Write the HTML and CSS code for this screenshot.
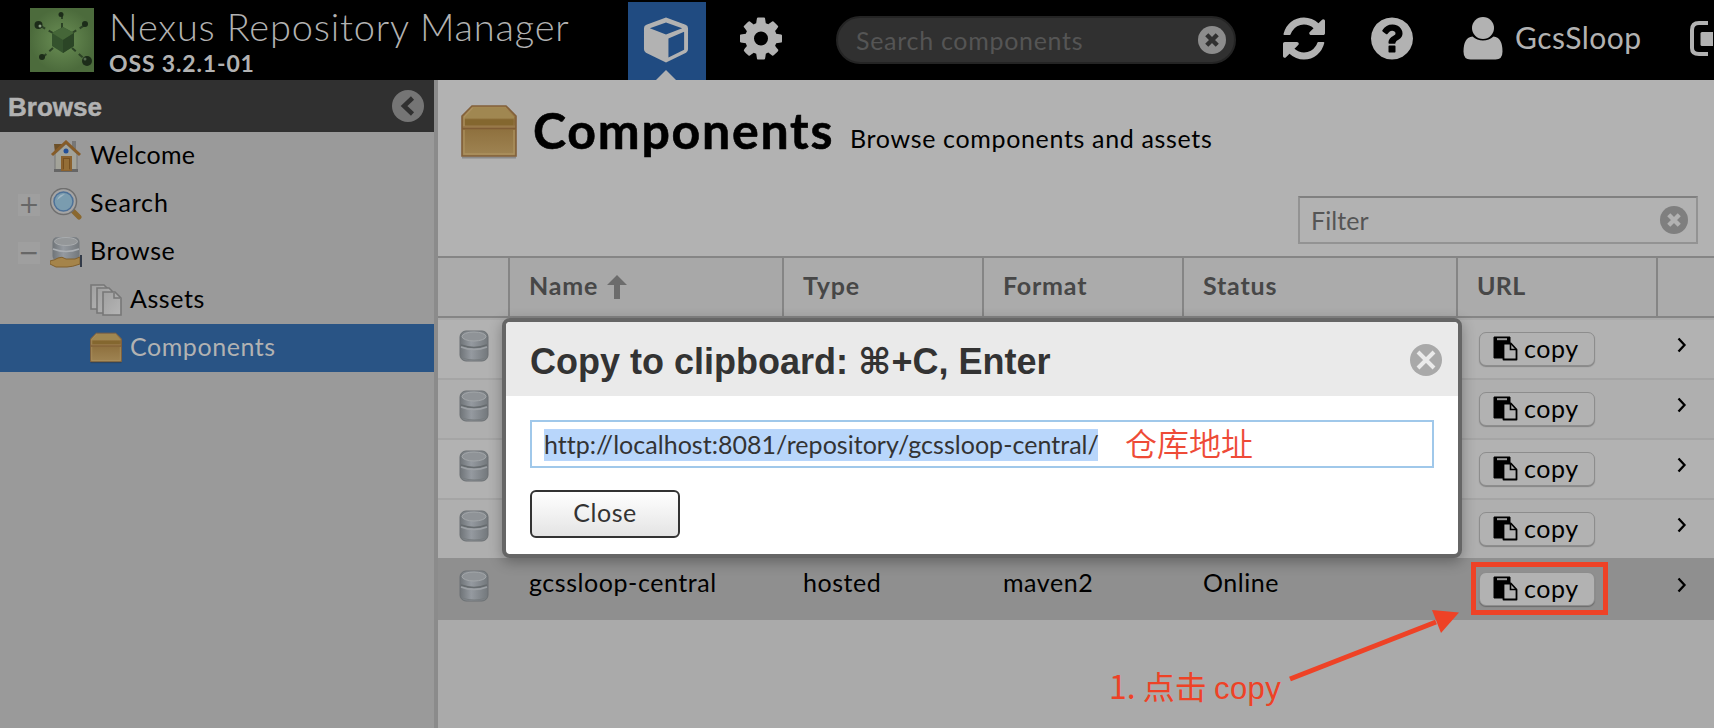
FILE: index.html
```
<!DOCTYPE html>
<html lang="en">
<head>
<meta charset="utf-8">
<title>Nexus Repository Manager</title>
<link rel="stylesheet" href="styles.css">
</head>
<body>
<svg class="defs" width="0" height="0">
  <defs>
    <linearGradient id="box-g" x1="0" y1="0" x2="0" y2="1"><stop offset="0" stop-color="#a98b57"/><stop offset=".3" stop-color="#8a6b38"/><stop offset="1" stop-color="#9f8453"/></linearGradient>
    <linearGradient id="db-g" x1="0" y1="0" x2="1" y2="0"><stop offset="0" stop-color="#6f7478"/><stop offset=".4" stop-color="#959aa0"/><stop offset="1" stop-color="#73787c"/></linearGradient>
    <radialGradient id="logo-g"><stop offset="0" stop-color="#6b8f55"/><stop offset="1" stop-color="#4c6b3c"/></radialGradient>
    <linearGradient id="page-g" x1="0" y1="0" x2="1" y2="1"><stop offset="0" stop-color="#a0a0a0"/><stop offset="1" stop-color="#b5b5b5"/></linearGradient>
    <symbol id="box" viewBox="0 0 56 54">
      <path d="M1 51.5h54v2H1z" fill="#000" opacity=".22"/>
      <path d="M11 1h34l10 10v40H1V11z" fill="url(#box-g)" stroke="#82603a" stroke-width="1.6"/>
      <path d="M12 2.5h32l9 9v2H3v-2z" fill="#a08751"/>
      <path d="M4 14.500h48v6H4z" fill="#84672f"/>
      <path d="M2 20.500h52v2.500H2z" fill="#98794a"/>
      <path d="M1 23.500h54" stroke="#7f5c35" stroke-width="1.600"/>
      <path d="M3 25v24h50V25M3 21v-9l8.500-9" fill="none" stroke="#ac915f" stroke-width="1.300"/>
    </symbol>
    <symbol id="db" viewBox="0 0 30 32">
      <rect x="1" y="1" width="28" height="30" rx="6" fill="url(#db-g)" stroke="#6c7174"/>
      <ellipse cx="15" cy="6.500" rx="12" ry="4.500" fill="#8f9397" stroke="#a2a6a9"/>
      <path d="M2 15q13 5 26 0" fill="none" stroke="#666b6e" stroke-width="1.500"/>
      <path d="M2 17q13 5 26 0" fill="none" stroke="#9da1a5" stroke-width="1.500"/>
      <path d="M3 28q12 4 24 0" fill="none" stroke="#787d80"/>
    </symbol>
    <symbol id="copy" viewBox="0 0 25 25">
      <path d="M1 1h16v7h-4l-3 3v11H1z" fill="#000" stroke="#000" stroke-linejoin="round"/>
      <path d="M4 2.200h10v2H4z" fill="#9c9c9c"/>
      <path d="M10.500 7.500h7.500l5.500 6v10h-13z" fill="#b2b2b2" stroke="#000" stroke-width="1.800" stroke-linejoin="round"/>
      <path d="M17.500 7.500v6h6" fill="none" stroke="#000" stroke-width="1.600"/>
    </symbol>
    <symbol id="clear" viewBox="0 0 32 32">
      <circle cx="16" cy="16" r="16" fill="currentColor"/>
      <path d="M10 10l12 12M22 10L10 22" stroke="var(--x)" stroke-width="var(--w)" stroke-linecap="butt"/>
    </symbol>
    <symbol id="clear-big" viewBox="0 0 32 32">
      <circle cx="16" cy="16" r="16" fill="currentColor"/>
      <path d="M8 8l16 16M24 8L8 24" stroke="var(--x)" stroke-width="var(--w)"/>
    </symbol>
    <symbol id="chev" viewBox="0 0 10 16"><path d="M1.500 1.500L7.500 8l-6 6.500" fill="none" stroke="#000" stroke-width="2.300"/></symbol>
  </defs>
</svg>

<div class="app">
  <header class="topbar">
    <svg class="logo" viewBox="0 0 64 64">
      <rect width="64" height="64" fill="url(#logo-g)"/>
      <g stroke="#2c4226" stroke-width="2" stroke-dasharray="5 4"><path d="M32 20V6M23 25L9 17M42 25l13-8M23 40L12 50M42 40l15 13"/></g>
      <g fill="#1c2c19"><circle cx="31" cy="6.500" r="2.500"/><circle cx="8.500" cy="17" r="4"/><circle cx="55" cy="16" r="3"/><circle cx="12" cy="49" r="3"/><circle cx="57" cy="53" r="5"/></g>
      <path d="M33 19l11 6v13l-11 7-11-7V25z" fill="#34522d"/><path d="M33 19l11 6-11 7-11-7z" fill="#456638"/><path d="M33 32l11-7v13l-11 7z" fill="#2b4526"/>
      <circle cx="10" cy="18" r="1.500" fill="#899d82"/><circle cx="55" cy="51" r="1.500" fill="#566b50"/>
    </svg>
    <div class="brand">
      <div class="brand-name">Nexus Repository Manager</div>
      <div class="brand-version">OSS 3.2.1-01</div>
    </div>
    <div class="mode active">
      <svg class="cube" viewBox="0 0 46 47"><path d="M23 .5L43 8q2.500 1 2.500 3.500V33q0 2.500-2 3.500L23 46.500 2.500 36.500Q.5 35.500.5 33V11.500Q.5 9 3 8zM23 5.500L6.500 11.500 23 18l16.500-6.500zM25.500 22v19.500L41.500 33.500V15z" fill="#b2b2b2" fill-rule="evenodd"/></svg>
      <span class="pointer"></span>
    </div>
    <svg class="fa gear" viewBox="128 128 1536 1536"><path d="M1152 896q0-106-75-181t-181-75-181 75-75 181 75 181 181 75 181-75 75-181zm512-109v222q0 12-8 23t-20 13l-185 28q-19 54-39 91 35 50 107 138 10 12 10 25t-9 23q-27 37-99 108t-94 71q-12 0-26-9l-138-108q-44 23-91 38-16 136-29 186-7 28-36 28h-222q-14 0-24.500-8.500t-11.500-21.500l-28-184q-49-16-90-37l-141 107q-10 9-25 9-14 0-25-11-126-114-165-168-7-10-7-23 0-12 8-23 15-21 51-66.500t54-70.500q-27-50-41-99l-183-27q-13-2-21-12.500t-8-23.500v-222q0-12 8-23t19-13l186-28q14-46 39-92-40-57-107-138-10-12-10-24 0-10 9-23 26-36 98.500-107.500t94.500-71.500q13 0 26 10l138 107q44-23 91-38 16-136 29-186 7-28 36-28h222q14 0 24.500 8.500t11.500 21.500l28 184q49 16 90 37l142-107q9-9 24-9 13 0 25 10 129 119 165 170 7 8 7 22 0 12-8 23-15 21-51 66.500t-54 70.500q26 50 41 98l183 28q13 2 21 12.500t8 23.500z"/></svg>
    <div class="search"><span class="search-hint">Search components</span><svg class="search-clear"><use href="#clear"/></svg></div>
    <svg class="fa refresh" viewBox="128 128 1536 1536"><path d="M1639 1056q0 5-1 7-64 268-268 434.500t-478 166.500q-146 0-282.500-55t-243.500-157l-129 129q-19 19-45 19t-45-19-19-45v-448q0-26 19-45t45-19h448q26 0 45 19t19 45-19 45l-137 137q71 66 161 102t187 36q134 0 250-65t186-179q11-17 53-117 8-23 30-23h192q13 0 22.500 9.500t9.500 22.500zm25-800v448q0 26-19 45t-45 19h-448q-26 0-45-19t-19-45 19-45l138-138q-148-137-349-137-134 0-250 65t-186 179q-11 17-53 117-8 23-30 23h-199q-13 0-22.500-9.500t-9.500-22.500v-7q65-268 270-434.500t480-166.500q146 0 284 55.500t245 156.500l130-129q19-19 45-19t45 19 19 45z"/></svg>
    <svg class="fa help" viewBox="128 128 1536 1536"><path d="M1024 1376v-192q0-14-9-23t-23-9h-192q-14 0-23 9t-9 23v192q0 14 9 23t23 9h192q14 0 23-9t9-23zm256-672q0-88-55.500-163t-138.500-116-170-41q-243 0-371 213-15 24 8 42l132 100q7 6 19 6 16 0 25-12 53-68 86-92 34-24 86-24 48 0 85.500 26t37.500 59q0 38-20 61t-68 45q-63 28-115.500 86.500t-52.500 125.500v36q0 14 9 23t23 9h192q14 0 23-9t9-23q0-19 21.500-49.500t54.500-49.500q32-18 49-28.500t46-35 44.500-48 28-60.500 12.500-81zm384 192q0 209-103 385.500t-279.500 279.500-385.500 103-385.500-103-279.500-279.500-103-385.500 103-385.500 279.500-279.500 385.500-103 385.500 103 279.500 279.500 103 385.500z"/></svg>
    <svg class="user-icon" viewBox="0 0 39 43"><circle cx="19.500" cy="11" r="11" fill="#b2b2b2"/><path d="M9 19.500q4.500 4 10.500 4t10.500-4q9 1 9 15 0 8-7 8H7q-7 0-7-8 0-14 9-15z" fill="#b2b2b2"/></svg>
    <span class="user-name">GcsSloop</span>
    <svg class="signout" viewBox="0 0 23 36"><path d="M18 2H9Q2 2 2 9v18q0 6 7 6h9" fill="none" stroke="#b2b2b2" stroke-width="4"/><path d="M12 11h11v14H12q-1.500 0-1.500-1.500v-11Q10.500 11 12 11z" fill="#b2b2b2"/></svg>
  </header>

  <div class="body">
    <nav class="side">
      <div class="side-head"><span class="side-title">Browse</span>
        <svg class="collapse" viewBox="0 0 32 32"><circle cx="16" cy="16" r="16" fill="#757575"/><path d="M20.500 8L12 16l8.500 8" fill="none" stroke="#303030" stroke-width="4.500"/></svg>
      </div>
      <div class="node l1"><span class="exp none"></span>
        <svg class="ico" viewBox="0 0 32 32"><path d="M22 1h4v10h-4z" fill="#777"/><path d="M5 14L16 4l11 10v16H5z" fill="#a3a399" stroke="#777"/><path d="M4 29h24v3H4z" fill="#666"/><path d="M4 4h9l-8 9z" fill="#6d5028"/><path d="M2 15L16 2l14 13" fill="none" stroke="#865c28" stroke-width="3"/><path d="M12 17h9v13h-9z" fill="#765020" stroke="#8b622e" stroke-width="2"/><path d="M14 19h5v11h-5z" fill="#946e37"/><circle cx="16" cy="11" r="2.500" fill="#235098"/></svg>
        <span class="t-welcome">Welcome</span></div>
      <div class="node l1"><span class="exp">+</span>
        <svg class="ico" viewBox="0 0 32 32"><path d="M22 22l7 7" stroke="#8a682f" stroke-width="5" stroke-linecap="round"/><circle cx="13.500" cy="13.500" r="13" fill="#a5a5a5" stroke="#6f6f6f" stroke-width="1.500"/><circle cx="13.500" cy="13.500" r="9.500" fill="#7a9caf" stroke="#4d7198" stroke-width="1.500"/><path d="M7 12q2-6 8-6-4 3-8 6z" fill="#a3b8c5"/></svg>
        <span class="t-search">Search</span></div>
      <div class="node l1"><span class="exp">−</span>
        <svg class="ico" viewBox="0 0 32 32"><rect x="2.500" y="1" width="27" height="24" rx="5" fill="url(#db-g)"/><ellipse cx="16" cy="5.500" rx="11.500" ry="4" fill="#949799" stroke="#a9acae"/><path d="M3 13q13 5 26 0" fill="none" stroke="#abafb3" stroke-width="1.500"/><path d="M0 25q5-1 8-3 4-2 8 1l9 0 5-2v7q-8 3-13 3H6L0 28z" fill="#a5844a" stroke="#80602f"/><path d="M30 19h2v12h-2z" fill="#333b49"/></svg>
        <span class="t-browse">Browse</span></div>
      <div class="node l2">
        <svg class="ico" viewBox="0 0 32 32"><g fill="url(#page-g)" stroke="#777" stroke-width="1.600"><path d="M1 1h13l3 3v21H1z"/><path d="M7 4h12l3 3v22H7z"/><path d="M13 8h12l6 6v17H13z"/></g><path d="M24 9v5h6" fill="none" stroke="#777" stroke-width="1.500"/></svg>
        <span class="t-assets">Assets</span></div>
      <div class="node l2 selected">
        <svg class="ico"><use href="#box"/></svg>
        <span class="t-comp">Components</span></div>
    </nav>

    <main class="main">
      <div class="page-head">
        <svg class="page-icon"><use href="#box"/></svg>
        <h1 class="page-title">Components</h1>
        <span class="page-sub">Browse components and assets</span>
      </div>
      <div class="toolbar">
        <div class="filter"><span class="filter-hint">Filter</span><svg class="filter-clear"><use href="#clear"/></svg></div>
      </div>
      <div class="grid-row grid-head">
        <div></div>
        <div class="sorted"><span class="h-name">Name</span><svg class="sort" viewBox="0 0 20 24"><path d="M10 0l10 10h-7v14H7V10H0z" fill="#6c6c6c"/></svg></div>
        <div><span class="h-type">Type</span></div><div><span class="h-format">Format</span></div><div><span class="h-status">Status</span></div><div><span class="h-url">URL</span></div><div></div>
      </div>
      <div class="grid-row item odd"><div class="c-ico"><svg class="db"><use href="#db"/></svg></div><div></div><div></div><div></div><div></div><div class="c-url"><span class="copy-btn"><svg><use href="#copy"/></svg><span>copy</span></span></div><div class="c-go"><svg><use href="#chev"/></svg></div></div>
      <div class="grid-row item"><div class="c-ico"><svg class="db"><use href="#db"/></svg></div><div></div><div></div><div></div><div></div><div class="c-url"><span class="copy-btn"><svg><use href="#copy"/></svg><span>copy</span></span></div><div class="c-go"><svg><use href="#chev"/></svg></div></div>
      <div class="grid-row item odd"><div class="c-ico"><svg class="db"><use href="#db"/></svg></div><div></div><div></div><div></div><div></div><div class="c-url"><span class="copy-btn"><svg><use href="#copy"/></svg><span>copy</span></span></div><div class="c-go"><svg><use href="#chev"/></svg></div></div>
      <div class="grid-row item before"><div class="c-ico"><svg class="db"><use href="#db"/></svg></div><div></div><div></div><div></div><div></div><div class="c-url"><span class="copy-btn"><svg><use href="#copy"/></svg><span>copy</span></span></div><div class="c-go"><svg><use href="#chev"/></svg></div></div>
      <div class="grid-row item current"><div class="c-ico"><svg class="db"><use href="#db"/></svg></div><div class="c-text"><span class="v-name">gcssloop-central</span></div><div class="c-text"><span class="v-type">hosted</span></div><div class="c-text"><span class="v-format">maven2</span></div><div class="c-text"><span class="v-status">Online</span></div><div class="c-url"><span class="copy-btn"><svg><use href="#copy"/></svg><span>copy</span></span></div><div class="c-go"><svg><use href="#chev"/></svg></div></div>
    </main>
  </div>

  <section class="dialog">
    <div class="dialog-head"><span class="dialog-title">Copy to clipboard: ⌘+C, Enter</span><svg class="dialog-x"><use href="#clear-big"/></svg></div>
    <div class="dialog-body">
      <div class="url-field"><span class="url-text">http://localhost:8081/repository/gcssloop-central/</span><span class="note">仓库地址</span></div>
      <div class="close-btn"><span>Close</span></div>
    </div>
  </section>

  <div class="mark-box"></div>
  <svg class="mark-arrow" viewBox="0 0 176 76"><path d="M4 71L150 14" stroke="#ee4226" stroke-width="5" fill="none"/><path d="M173 4.500L146 2l9 23z" fill="#ee4226"/></svg>
  <div class="mark-text">1. 点击 <span class="mark-copy">copy</span></div>
</div>
</body>
</html>
```
FILE: styles.css
```
* { box-sizing: border-box; }
body {
  margin: 0;
  font-family: Lato, "Noto Sans CJK SC", sans-serif;
  font-size: 25px;
  letter-spacing: .55px;
  color: #000;
  white-space: nowrap;
}
.defs { position: absolute; }
.app { position: relative; width: 1714px; height: 728px; overflow: hidden; background: #aaa; display: flex; flex-direction: column; }
svg { display: block; flex: none; }

/* Top bar */
.topbar { height: 80px; flex: none; background: #000; color: #b2b2b2; display: flex; align-items: flex-start; padding-left: 30px; }
.logo { width: 64px; height: 64px; margin-top: 8px; }
.brand { margin-left: 15px; width: 519px; flex: none; }
.brand-name { font-weight: 300; font-size: 38px; line-height: 46px; padding-top: 3px; letter-spacing: .8px; }
.brand-version { font-weight: 700; font-size: 23px; line-height: 28px; letter-spacing: .85px; }
.mode { position: relative; width: 78px; height: 78px; margin-top: 2px; background: #204b81; flex: none; display: flex; justify-content: center; padding: 15px 2px 0 0; }
.cube { width: 46px; height: 46px; }
.pointer { position: absolute; left: 28px; bottom: 0; border: 10px solid transparent; border-top: 0; border-bottom: 10px solid #b2b2b2; }
.fa { width: 42px; height: 43px; margin-top: 17px; fill: #b2b2b2; }
.gear { margin-left: 34px; }
.search { width: 400px; height: 48px; flex: none; margin: 16px 0 0 54px; border-radius: 24px; background: #303030; border: 2px solid #242424; color: #555; display: flex; align-items: center; justify-content: space-between; padding: 0 8px 0 18px; letter-spacing: .7px; }
.search-clear { width: 28px; height: 28px; color: #8c8c8c; --x: #303030; --w: 5px; }
.refresh { margin-left: 47px; }
.help { margin-left: 46px; }
.user-icon { width: 40px; height: 43px; margin: 17px 0 0 50px; }
.user-name { font-size: 30px; line-height: 36px; letter-spacing: .45px; margin: 19px 0 0 12px; width: 175px; flex: none; }
.signout { width: 23px; height: 36px; margin-top: 21px; }

/* Sidebar */
.body { display: flex; flex: 1; }
.side { width: 438px; flex: none; background: #9a9a9a; border-right: 4px solid #8b8b8b; }
.side-head { height: 52px; background: #303030; color: #b2b2b2; display: flex; align-items: center; justify-content: space-between; padding: 0 10px 0 8px; font: 700 26px "Liberation Sans", Arial, sans-serif; letter-spacing: 0; }
.side-title { -webkit-text-stroke: .5px #b2b2b2; padding-top: 2px; }
.collapse { width: 32px; height: 32px; }
.node { height: 48px; display: flex; align-items: center; padding-bottom: 4px; }
.node .ico { width: 32px; height: 32px; margin-right: 8px; position: relative; top: 2px; }
.l1 { padding-left: 18px; }
.l2 { padding-left: 90px; }
.exp { width: 22px; height: 22px; margin: 5px 10px 0 0; background: #9f9f9f; color: #676767; font: 25px/21px "DejaVu Sans", sans-serif; letter-spacing: 0; display: flex; justify-content: center; flex: none; }
.exp.none { visibility: hidden; }
.selected { background: #295485; color: #b2b2b2; }
.t-welcome { letter-spacing: .3px; }
.t-search { letter-spacing: .85px; }

/* Content */
.main { flex: 1; min-width: 0; background: #aaa; }
.page-head { height: 104px; padding: 25px 0 0 23px; display: flex; align-items: flex-start; background: #b2b2b2; }
.page-icon { width: 56px; height: 54px; }
.page-title { margin: -5px 0 0 16px; width: 317px; font-size: 50px; line-height: 60px; font-weight: 700; letter-spacing: 1.75px; -webkit-text-stroke: .6px #000; }
.page-sub { line-height: 30px; margin-top: 18px; letter-spacing: .66px; }
.toolbar { height: 72px; background: #b2b2b2; display: flex; justify-content: flex-end; padding: 12px 16px 0 0; }
.filter { width: 400px; height: 48px; border: 2px solid #939393; border-top-color: #808080; color: #555; display: flex; align-items: center; justify-content: space-between; padding: 0 8px 0 11px; letter-spacing: .1px; }
.filter-clear { width: 28px; height: 28px; color: #7f7f7f; --x: #b2b2b2; --w: 5px; }
.grid-row { display: grid; grid-template-columns: 72px 274px 200px 200px 274px 200px 1fr; }
.grid-head { height: 62px; border-top: 2px solid #858585; border-bottom: 2px solid #858585; background: #ababab; color: #474747; font-weight: 700; letter-spacing: .8px; }
.grid-head > div { border-right: 2px solid #858585; padding: 0 0 5px 19px; display: flex; align-items: center; }
.grid-head > div:last-child { border-right: 0; }
.grid-head .sorted { background: #a8a8a8; }
.h-url { letter-spacing: .3px; }
.sort { width: 20px; height: 24px; margin: 4px 0 0 9px; }
.item { height: 60px; padding-bottom: 2px; background: #afafaf; border-bottom: 2px solid #a5a5a5; }
.item.odd { background: #b2b2b2; }
.item.before { border-bottom-color: #8f8f8f; }
.item:nth-of-type(4) { margin-top: 2px; }
.item.current { background: #8f8f8f; border-bottom-color: #8f8f8f; }
.c-ico { padding: 10px 0 0 21px; }
.db { width: 30px; height: 32px; }
.c-text { padding-left: 19px; line-height: 30px; padding-top: 7px; }
.c-url { padding: 12px 0 0 21px; }
.copy-btn { width: 116px; height: 34px; border: 1px solid #8d8d8d; border-radius: 7px; background: #b2b2b2; box-shadow: 0 1px 1px rgba(0,0,0,.25); display: flex; align-items: center; padding: 0 0 3px 13px; gap: 6px; }
.copy-btn svg { width: 25px; height: 25px; position: relative; top: 1px; }
.c-go { padding: 17px 0 0 19px; }
.c-go svg { width: 10px; height: 16px; }

/* Dialog */
.dialog { position: absolute; left: 502px; top: 318px; width: 960px; height: 240px; border: 4px solid #666; border-radius: 8px; background: #fff; color: #333; box-shadow: 0 4px 14px rgba(0,0,0,.3); overflow: hidden; }
.dialog-head { height: 74px; background: #eaeaea; display: flex; align-items: center; justify-content: space-between; padding: 2px 16px 0 24px; font: 700 36px "Liberation Sans", "DejaVu Sans", sans-serif; letter-spacing: 0; }
.dialog-title { padding-top: 3px; }
.dialog-x { width: 32px; height: 32px; color: #a9a9a9; --x: #eaeaea; --w: 4px; }
.dialog-body { padding: 24px; }
.url-field { height: 48px; width: 904px; border: 2px solid #a0c8ea; padding: 2px 0 0 12px; display: flex; align-items: center; }
.url-text { background: #b8d6fb; height: 32px; line-height: 30px; width: 554px; letter-spacing: .03px; }
.note { margin: -6px 0 0 27px; color: #ee4b37; font: 350 32px/40px "Noto Sans CJK SC", sans-serif; letter-spacing: 0; }
.close-btn { margin-top: 22px; width: 150px; height: 48px; border: 2px solid #333; border-radius: 6px; background: linear-gradient(#fff, #e4e4e4); display: flex; align-items: center; justify-content: center; padding-bottom: 4px; }

/* Annotations */
.mark-box { position: absolute; left: 1471px; top: 562px; width: 137px; height: 53px; border: 5px solid #ee4226; }
.mark-arrow { position: absolute; left: 1286px; top: 608px; width: 176px; height: 76px; }
.mark-text { position: absolute; left: 1109px; top: 665px; color: #ee4226; font: 32px/40px "Noto Sans CJK SC", sans-serif; letter-spacing: 0; }
.mark-copy { font-family: "Liberation Sans", sans-serif; font-size: 31px; letter-spacing: .4px; }
```
